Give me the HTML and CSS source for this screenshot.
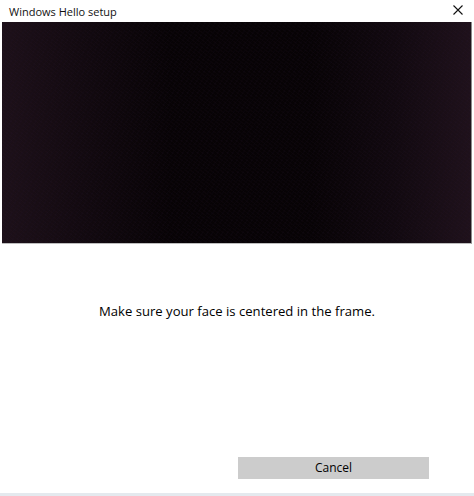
FILE: index.html
```html
<!DOCTYPE html>
<html>
<head>
<meta charset="utf-8">
<link rel="stylesheet" href="styles.css">
</head>
<body>
<div class="window">
  <div class="titlebar">
    <span class="title">Windows Hello setup</span>
    <span class="close" aria-label="Close">
      <svg width="10" height="10" viewBox="0 0 10 10"><path d="M0.5 0.5 L9.5 9.5 M9.5 0.5 L0.5 9.5" stroke="#111" stroke-width="1.1" fill="none"/></svg>
    </span>
  </div>
  <div class="camera"><div class="noise"></div></div>
  <div class="content">
    <p class="message">Make sure your face is centered in the frame.</p>
  </div>
  <div class="actions">
    <button class="cancel">Cancel</button>
  </div>
  <div class="footer"></div>
</div>
</body>
</html>
```
FILE: styles.css
```css
html, body {
  margin: 0;
  padding: 0;
  background: #ffffff;
}
.window {
  width: 474px;
  height: 496px;
  display: flex;
  flex-direction: column;
  font-family: "Open Sans", "Noto Sans", sans-serif;
  color: #000;
  overflow: hidden;
}
.titlebar {
  height: 22px;
  display: flex;
  align-items: center;
  justify-content: space-between;
  padding: 0 11px 0 9px;
  flex: none;
}
.title {
  font-size: 11px;
  color: #111;
}
.close {
  display: flex;
  width: 10px;
  height: 10px;
  position: relative;
  top: -1px;
}
.camera {
  flex: none;
  height: 221px;
  margin: 0 2px;
  border-right: 1px solid #8a8a8a;
  border-bottom: 1px solid #bdbdbd;
  background:
    linear-gradient(90deg, rgba(30,17,26,0.95) 0%, rgba(22,12,19,0.7) 18%, rgba(6,2,5,0) 36%, rgba(6,2,5,0) 66%, rgba(22,12,20,0.7) 84%, rgba(32,18,28,0.95) 100%),
    #070305;
  position: relative;
}
.noise {
  position: absolute;
  inset: 0;
  background:
    repeating-linear-gradient(37deg, rgba(50,25,45,0.10) 0 1px, transparent 1px 3px),
    repeating-linear-gradient(-53deg, rgba(25,18,50,0.10) 0 1px, transparent 1px 4px);
}
.content {
  flex: 1;
  display: flex;
  align-items: flex-start;
  justify-content: center;
}
.message {
  margin: 58px 0 0 0;
  font-size: 13.1px;
  color: #000;
}
.actions {
  flex: none;
  display: flex;
  justify-content: flex-end;
  padding: 0 45px 14px 0;
}
.cancel {
  width: 191px;
  height: 22px;
  border: none;
  background: #cccccc;
  font-family: "Open Sans", "Noto Sans", sans-serif;
  font-size: 12px;
  color: #000;
  padding: 0 0 1px 0;
}
.footer {
  flex: none;
  height: 3px;
  background: #e4e9ee;
}
```
